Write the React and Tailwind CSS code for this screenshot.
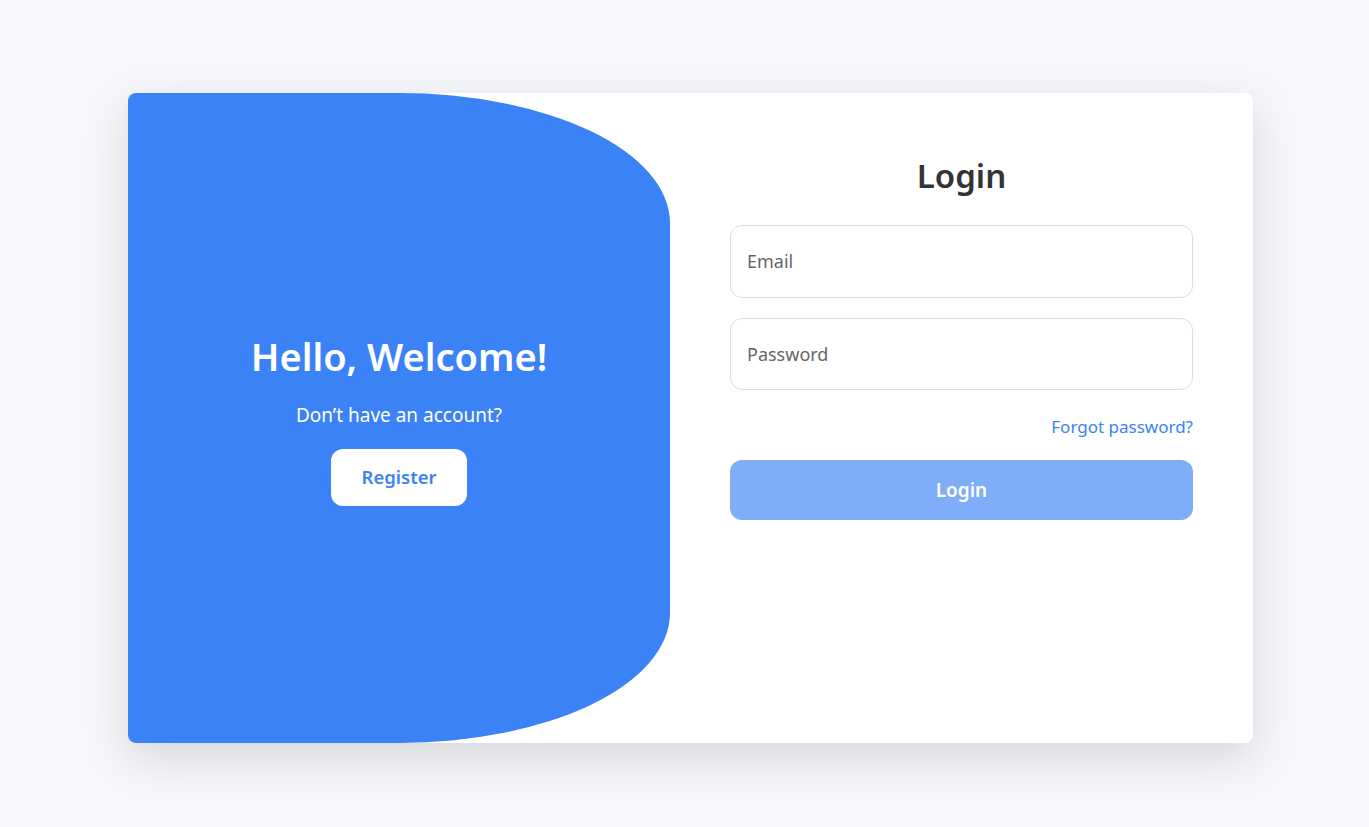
import React from 'react';

function App() {
  return (
    <div
      className="min-h-screen bg-[#f5f7fa] flex items-center justify-center pl-[12px] pt-[8px]"
      style={{ fontFamily: '"Noto Sans", "Open Sans", sans-serif' }}
    >
      <div className="w-[1125px] h-[650px] bg-white rounded-lg overflow-hidden flex shadow-[0_15px_45px_rgba(0,0,0,0.13)]">
        {/* left blue panel */}
        <div className="w-[542px] h-full bg-[#3b82f6] rounded-tr-[271px_130px] rounded-br-[271px_130px] flex flex-col items-center justify-center text-white">
          <h1 className="mt-[3px] text-[38px] font-semibold leading-tight">Hello, Welcome!</h1>
          <p className="text-[19px] mt-[21px]">Don’t have an account?</p>
          <button className="mt-[19px] w-[136px] h-[57px] bg-white text-[#3b82f6] rounded-xl text-[18.5px] font-semibold">
            Register
          </button>
        </div>

        {/* right form panel */}
        <div className="flex-1 px-[60px] pt-[62px]">
          <h2 className="text-center text-[33px] font-semibold text-[#333] leading-tight">Login</h2>
          <form className="mt-[29px] flex flex-col" onSubmit={(e) => e.preventDefault()}>
            <input
              type="email"
              placeholder="Email"
              className="h-[73px] w-full border border-[#ddd] rounded-xl px-[16px] text-[18px] text-[#333] placeholder:text-[#666] outline-none"
            />
            <input
              type="password"
              placeholder="Password"
              className="mt-[20px] h-[72px] w-full border border-[#ddd] rounded-xl px-[16px] text-[18px] text-[#333] placeholder:text-[#666] outline-none"
            />
            <div className="mt-[24px] text-right">
              <a href="#" className="text-[17px] text-[#3b82f6]">Forgot password?</a>
            </div>
            <button
              type="submit"
              className="mt-[21px] h-[60px] w-full rounded-xl bg-[#7fadf7] text-white text-[19px] font-semibold"
            >
              Login
            </button>
          </form>
        </div>
      </div>
    </div>
  );
}

export default App;
